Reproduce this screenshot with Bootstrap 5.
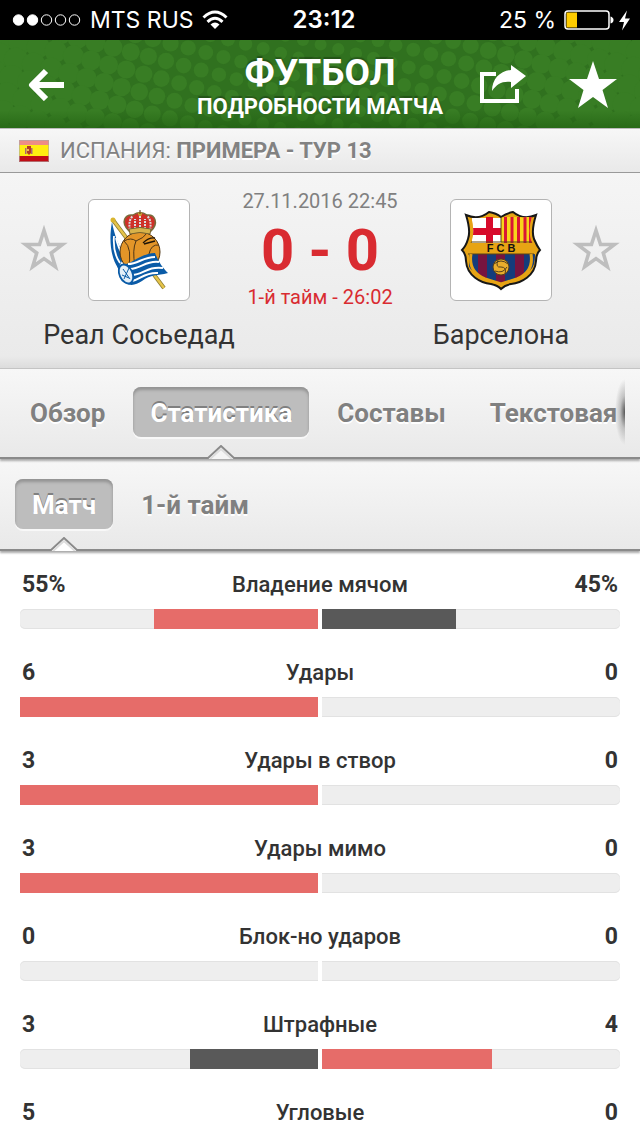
<!DOCTYPE html>
<html lang="ru">
<head>
<meta charset="utf-8">
<meta name="viewport" content="width=device-width, initial-scale=1">
<title>Футбол – Подробности матча</title>
<link href="https://cdn.jsdelivr.net/npm/bootstrap@5.3.0/dist/css/bootstrap.min.css" rel="stylesheet">
<style>
body{font-family:Roboto,"Liberation Sans",sans-serif;color:#333;background:#fff}
svg{display:block}
.statusbar{height:40px;background:#000;color:#fff;font:23px/40px Inter,sans-serif;display:grid;grid-template-columns:1fr auto 1fr}
.clock{font-weight:600;font-size:24px;padding-left:8px}
.topbar{height:88px;background:#30711f;color:#fff;position:relative;overflow:hidden;display:grid;grid-template-columns:1fr auto 1fr}
.halftone{position:absolute;left:50%;top:0;margin-left:-320px;width:640px;height:88px}
.topbar>div{position:relative;z-index:1}
.topbar::after{content:"";position:absolute;inset:0;background:linear-gradient(transparent 80%,#1b5a0c88);pointer-events:none}
.iconbtn{border:0;background:none;padding:0;color:inherit}
.actions{gap:42px;padding-right:22px}
.titles{padding-top:14px}
.title1{font-size:37px;line-height:38px;font-weight:700;margin:0;text-shadow:0 -2px 1px #0004}
.title2{font-size:22px;line-height:30px;font-weight:700;margin:0;text-shadow:0 -2px 1px #0004}
.panel{background:linear-gradient(#f7f7f7,#e9e9e9)}
.league{height:45px;border-top:1px solid #bbb;border-bottom:1px solid #999;color:#828282;font-size:22px;text-shadow:0 2px 0 #fff}
.match{height:196px;display:grid;grid-template-columns:88px 102px 1fr 102px 88px;grid-template-rows:102px 66px;padding-top:26px;border-bottom:1px solid #c4c4c4;background:linear-gradient(#f5f5f5,#eaeaea 94%,#dcdcdc)}
.crest{width:102px;height:102px;border:1px solid #b4b4b4;border-radius:6px;background:#fff}
.score{margin-top:-12px}
.when{font-size:20px;line-height:28px;color:#808080}
.goals{font-size:58px;line-height:70px;font-weight:700;color:#d92b31}
.period{font-size:20px;line-height:24px;color:#d92b31}
.team{font-size:27px;line-height:36px}
.tabs{position:relative;border-bottom:2px solid #8a8a8a;box-shadow:0 2px 2px #aaa;gap:12px;padding:18px 16px 20px 14px;z-index:2}
.tabs.sub{z-index:1;padding-left:15px;padding-top:20px}
.tabscroll{overflow-x:clip;gap:12px}
.tab{height:50px;border:0;border-radius:8px;background:none;padding:2px 16px 0;color:#808080;font-size:26px;line-height:48px;font-weight:700;white-space:nowrap;text-shadow:0 2px 0 #fff;position:relative;flex:none}
.tab.on{padding:2px 17px 0;background:#bdbdbd;color:#fff;text-shadow:0 -2px 0 #808080;box-shadow:inset 0 3px 3px #949494,0 2px 0 #f8f8f8}
.tab .notch{position:absolute;left:50%;margin-left:-15px;top:58px}
.edge{position:absolute;right:15px;top:10px;width:14px;height:66px;background:radial-gradient(ellipse 10px 33px at 100% 50%,#555,#9998 50%,transparent)}
.stats{padding:20px 20px 0}
.stat{margin-bottom:30px}
.nums{font-size:23px;line-height:26px;padding:1px 2px 0;margin-bottom:11px;font-weight:700;display:grid;grid-template-columns:1fr auto 1fr}
.nums .what{font-weight:500;font-size:22px}
.bars{gap:4px}
.half{flex:1;height:20px;background:#eee;box-shadow:inset 0 1px #e2e2e2,inset 0 -1px #e2e2e2;display:flex}
.half:first-child{justify-content:flex-end;border-radius:5px 0 0 5px}
.half:last-child{border-radius:0 5px 5px 0}
.lead1{background:#e66c69}.trail1{background:#595959}
</style>
<script src="https://cdn.jsdelivr.net/npm/bootstrap@5.3.0/dist/js/bootstrap.bundle.min.js"></script>
</head>
<body>
<div class="statusbar">
 <div class="d-flex align-items-center gap-2 ps-2 ms-1">
  <svg width="70" height="16" viewBox="0 0 70 16" fill="none" stroke="#fff"><g fill="#fff"><circle cx="6.5" cy="8" r="5.2"/><circle cx="20.500" cy="8" r="5.2"/></g><circle cx="34.500" cy="8" r="5.2"/><circle cx="48.500" cy="8" r="5.2"/><circle cx="62.500" cy="8" r="5.2"/></svg>
  <span class="text-nowrap">MTS RUS</span>
  <svg width="26" height="20" viewBox="0 0 26 20" fill="none" stroke="#fff" stroke-width="3"><path d="M1.500 7.500Q13-3.500 24.500 7.500M5.500 11.800Q13 4.800 20.500 11.800"/><path d="M8.500 14.500Q13 10.500 17.500 14.500L13 19Z" fill="#fff" stroke="none"/></svg>
 </div>
 <span class="clock">23:12</span>
 <div class="d-flex align-items-center justify-content-end pe-2">
  <span class="text-nowrap me-2">25 %</span>
  <svg width="68" height="24" viewBox="0 0 68 24"><rect x="1" y="3" width="44" height="18" rx="3" fill="none" stroke="#fff" stroke-width="1.500"/><rect x="2.500" y="4.500" width="10.500" height="15" fill="#fc0"/><path d="M46.500 8.500q3 1 3 3.500t-3 3.500z" fill="#fff"/><path d="M63 2.500L55 14h5l-2 8.500L66 10.500h-5z" fill="#fff"/></svg>
 </div>
</div>

<header class="topbar">
 <svg class="halftone" viewBox="0 0 640 88" fill="#387d24" aria-hidden="true"></svg>
 <div class="d-flex align-items-center ps-4"><button class="iconbtn ms-1" aria-label="Назад"><svg width="36" height="34" viewBox="0 0 36 34" fill="none" stroke="#fff" stroke-width="6"><path d="M36 18H5M18 4L4 18L18 32" stroke-linejoin="round"/></svg></button></div>
 <div class="titles text-center"><h1 class="title1">ФУТБОЛ</h1><h2 class="title2 text-nowrap">ПОДРОБНОСТИ МАТЧА</h2></div>
 <div class="actions d-flex align-items-center justify-content-end">
  <button class="iconbtn" aria-label="Поделиться"><svg width="46" height="38" viewBox="0 0 46 38"><path d="M16 9H2V36H37V24" fill="none" stroke="#fff" stroke-width="4"/><path d="M12 26C12 14 20 6 31 5V0L46 11L31 23V17C22 16 17 19 12 26Z" fill="#fff"/></svg></button>
  <button class="iconbtn" aria-label="В избранное"><svg width="50" height="48" viewBox="2 0 50 48"><path d="M27 1L33 19H51L36.500 30L42 48L27 37L12 48L17.500 30L3 19H21Z" fill="#fff"/></svg></button>
 </div>
</header>

<div class="league panel d-flex align-items-center">
 <svg class="ms-3 me-2" width="36" height="22" viewBox="0 0 36 22"><rect x="3" width="30" height="22" fill="#c00d16"/><rect x="3" width="30" height="6" fill="#ee8d86"/><rect x="3" y="5" width="30" height="11" fill="#fe1"/><rect x="3.500" y=".5" width="29" height="21" fill="none" stroke="#aaa" stroke-opacity=".6"/><path d="M9 8h1.500v6H9zM15 8h1.500v6H15z" fill="#a67"/><path d="M11 6h4v7l-2 2-2-2z" fill="#b43a22"/><path d="M11 9h2v2h-2z" fill="#eb5"/></svg>
 <span>ИСПАНИЯ: <b>ПРИМЕРА - ТУР 13</b></span>
</div>

<section class="match">
 <button class="iconbtn d-flex align-items-center justify-content-center" aria-label="Реал Сосьедад в избранное"><svg width="52" height="50" viewBox="0 1 48 46"><path d="M24 6L28.200 19H41L30.700 26.800L34.500 39.500L24 32L13.500 39.500L17.300 26.800L7 19H19.800Z" fill="none" stroke="#bebebe" stroke-width="3.300"/></svg></button>
 <div class="crest"><svg width="100" height="100" viewBox="0 0 100 100">
  <path d="M24 20L75 88" stroke="#8a7a30" stroke-width="4"/><path d="M24 20L75 88" stroke="#e6c44a" stroke-width="2.500"/><circle cx="24" cy="20" r="2.500" fill="#d9b52f"/>
  <path d="M23 22C20 38 21 56 29 68L36 56C30 47 25 34 23 22Z" fill="#0a5ba7"/><path d="M25 36C24 48 26 56 31 63M27 38C29 47 31 51 34 55" stroke="#fff" stroke-width="1.800" fill="none"/>
  <circle cx="51" cy="52" r="20" fill="#e39528" stroke="#4d3516"/><path d="M35 41Q44 48 39 70M35 41Q42 37 47 41Q43 50 46 66M47 41Q55 38 58 33M60 54Q62 44 70 45" stroke="#4d3516" stroke-width="1" fill="none"/><path d="M54 43Q60 37 66 38M55 44l11-3" stroke="#1f1508" stroke-width="1.300" fill="none"/>
  <path d="M28 65C42 67 48 54 66 53C70 63 74 68 79 73C68 76 62 74 53 81C46 86 38 87 32 79Z" fill="#0a5ba7"/><path d="M39 64C49 64 54 57 66 57M41 69C52 69 57 60 70 62M43 75C54 75 58 66 74 68M43 81C52 79 56 72 69 73" stroke="#fff" stroke-width="2" fill="none"/>
  <ellipse cx="37" cy="74" rx="6.500" ry="10" transform="rotate(-25 37 74)" fill="#e5eff8" stroke="#0a5ba7" stroke-width="1.800"/><path d="M34 69l7 10M40 68l-5 11M33 75l7 3" stroke="#0a5ba7"/>
  <path d="M40 31C31 22 36 14 44 15Q51 10 58 15C66 14 70 23 62 31Z" fill="#cf3028" stroke="#786c3c" stroke-width="1.500"/><path d="M41 30Q39 20 44 16M51 30V13M61 30Q63 20 58 16M46 29V19M56 29V19" stroke="#d9dddd" stroke-width="2" stroke-dasharray="2 1" fill="none"/><path d="M40 29Q51 26 62 29L61 34Q51 31 41 34Z" fill="#d8b34a" stroke="#77642d"/><circle cx="51" cy="14" r="2" fill="#c9a534"/><path d="M51 10v4" stroke="#4d3516"/>
 </svg></div>
 <div class="score text-center text-nowrap d-flex flex-column align-items-center">
  <div class="when">27.11.2016 22:45</div><div class="goals">0 - 0</div><div class="period">1-й тайм - 26:02</div>
 </div>
 <div class="crest"><svg width="100" height="100" viewBox="0 0 100 100">
  <defs><clipPath id="shield"><path d="M20 16Q33 19 39 15Q45 16 50 18Q55 16 62 15Q68 19 81 16Q77 30 80 40Q86 51 83 64C80 75 62 79 50 83C38 79 20 75 17 64Q14 51 21 40Q24 30 20 16Z"/></clipPath></defs>
  <path d="M15 15C24 19 32 17 38 12Q45 13 50 17Q56 13 62 12C68 17 76 19 85 15Q80 31 83 39Q86 46 89 50Q85 54 85 61C84 76 70 83 60 84Q54 85 50 89Q46 85 40 84C30 83 16 76 15 61Q15 54 11 50Q15 46 17 39Q20 31 15 15Z" fill="#e7a414" stroke="#171717" stroke-width="2"/>
  <g clip-path="url(#shield)"><path d="M21 18H50V43H21Z" fill="#fff"/><path d="M35 17h7v26h-7zM21 28h29v7H21z" fill="#d70b2b"/><path d="M50 17h31v26H50z" fill="#f8d51b"/><path d="M53 17h3v26h-3zM59.500 17h3v26h-3zM66 17h3v26h-3zM72.500 17h3v26h-3zM78 17h3v26h-3z" fill="#d91635"/><path d="M18 54h66v30H18z" fill="#143c7b"/><path d="M27 54h9v30h-9zM45 54h9v30h-9zM64 54h9v30h-9z" fill="#77143f"/><path d="M16 42h68M17 54h66M50 18v24" stroke="#574216" stroke-width="1"/></g>
  <path d="M20 54Q17 72 34 79L50 84L66 79Q83 72 80 54" fill="none" stroke="#e7a414" stroke-width="3"/>
  <circle cx="50" cy="67" r="8" fill="#e9ad2c" stroke="#54401c"/><path d="M43 64Q50 58 57 64M44 71Q52 74 56 67M47 60Q44 68 50 67Q56 67 54 74" fill="none" stroke="#54401c"/>
  <text x="50" y="51.500" text-anchor="middle" font-family="Liberation Sans, sans-serif" font-weight="700" font-size="11" fill="#111">F C B</text>
 </svg></div>
 <button class="iconbtn d-flex align-items-center justify-content-center" aria-label="Барселона в избранное"><svg width="52" height="50" viewBox="0 1 48 46"><path d="M24 6L28.200 19H41L30.700 26.800L34.500 39.500L24 32L13.500 39.500L17.300 26.800L7 19H19.800Z" fill="none" stroke="#bebebe" stroke-width="3.300"/></svg></button>
 <div></div><div class="team d-flex justify-content-center text-nowrap pt-3">Реал Сосьедад</div><div></div><div class="team d-flex justify-content-center text-nowrap pt-3">Барселона</div>
</section>

<nav class="tabs panel">
 <div class="tabscroll d-flex">
  <button class="tab">Обзор</button>
  <button class="tab on">Статистика<svg class="notch" width="30" height="14" viewBox="0 0 30 14"><path d="M1 14L15 1L29 14Z" fill="#f5f5f5"/><path d="M1 14L15 1L29 14" fill="none" stroke="#8a8a8a" stroke-width="2"/><path d="M4 14L15 4L26 14" fill="none" stroke="#ddd" stroke-width="2"/></svg></button>
  <button class="tab">Составы</button>
  <button class="tab">Текстовая</button>
 </div>
 <span class="edge"></span>
</nav>
<nav class="tabs sub panel d-flex">
 <button class="tab on">Матч<svg class="notch" width="30" height="14" viewBox="0 0 30 14"><path d="M1 14L15 1L29 14Z" fill="#fff"/><path d="M1 14L15 1L29 14" fill="none" stroke="#8a8a8a" stroke-width="2"/><path d="M4 14L15 4L26 14" fill="none" stroke="#ddd" stroke-width="2"/></svg></button>
 <button class="tab">1-й тайм</button>
</nav>

<main class="stats">
 <div class="stat"><div class="nums"><span>55%</span><span class="what">Владение мячом</span><span class="text-end">45%</span></div><div class="bars d-flex"><div class="half"><div class="lead1" style="width:55%"></div></div><div class="half"><div class="trail1" style="width:45%"></div></div></div></div>
 <div class="stat"><div class="nums"><span>6</span><span class="what">Удары</span><span class="text-end">0</span></div><div class="bars d-flex"><div class="half"><div class="lead1" style="width:100%"></div></div><div class="half"></div></div></div>
 <div class="stat"><div class="nums"><span>3</span><span class="what">Удары в створ</span><span class="text-end">0</span></div><div class="bars d-flex"><div class="half"><div class="lead1" style="width:100%"></div></div><div class="half"></div></div></div>
 <div class="stat"><div class="nums"><span>3</span><span class="what">Удары мимо</span><span class="text-end">0</span></div><div class="bars d-flex"><div class="half"><div class="lead1" style="width:100%"></div></div><div class="half"></div></div></div>
 <div class="stat"><div class="nums"><span>0</span><span class="what">Блок-но ударов</span><span class="text-end">0</span></div><div class="bars d-flex"><div class="half"></div><div class="half"></div></div></div>
 <div class="stat"><div class="nums"><span>3</span><span class="what">Штрафные</span><span class="text-end">4</span></div><div class="bars d-flex"><div class="half"><div class="trail1" style="width:43%"></div></div><div class="half"><div class="lead1" style="width:57%"></div></div></div></div>
 <div class="nums mb-0"><span>5</span><span class="what">Угловые</span><span class="text-end">0</span></div>
</main>
<script>
// Halftone ground of the header: a tilted grid of dots that grow toward both sides
const tone = document.querySelector('.halftone'), step = 18.2, tilt = 14.5 * Math.PI / 180;
let dots = '';
for (let i = -30; i < 30; i++) for (let j = -30; j < 30; j++) {
  const x = 166 + step * (i * Math.cos(tilt) - j * Math.sin(tilt));
  const y = 21 + step * (i * Math.sin(tilt) + j * Math.cos(tilt));
  if (x < -20 || x > 660 || y < -20 || y > 108) continue;
  const r = 6 + 6.6 * Math.pow(Math.abs(x - 320) / 320, 1.5);
  dots += `<circle cx="${x.toFixed(1)}" cy="${y.toFixed(1)}" r="${r.toFixed(1)}"/>`;
}
tone.innerHTML = dots;
</script>
</body>
</html>
